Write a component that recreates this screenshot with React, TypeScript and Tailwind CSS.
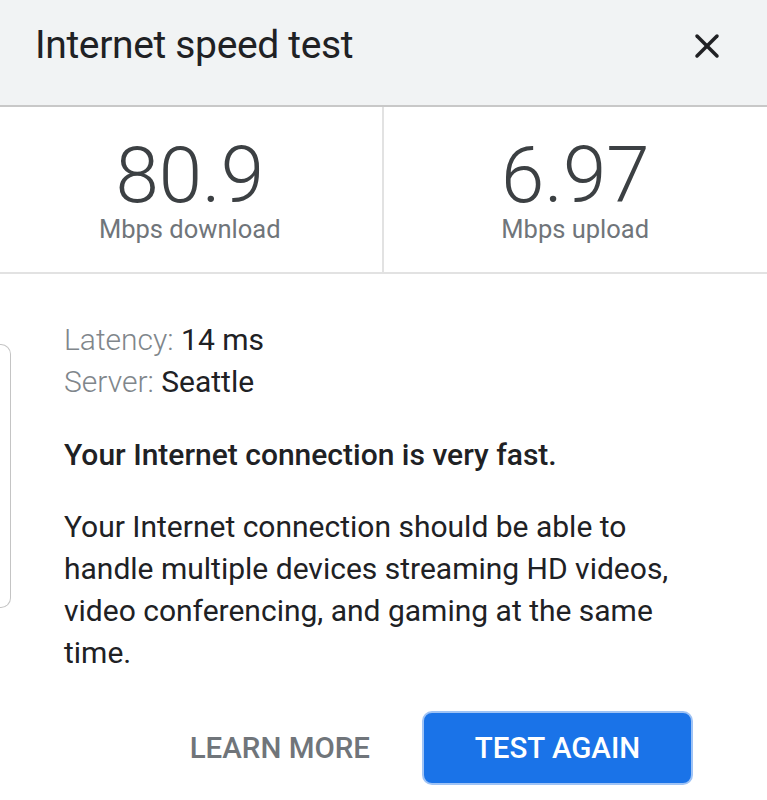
import { X } from 'lucide-react';

export default function App() {
  return (
    <div className="w-[767px] h-[800px] bg-white overflow-hidden font-['Roboto',sans-serif]">
      <div className="h-[107px] bg-[#f1f3f4] border-b-2 border-[#c8c8c8] flex items-center justify-between pl-[35px] pr-[40px]">
        <h1 className="text-[39px] text-[#202124] font-normal tracking-[-0.35px] -mt-[14px]">Internet speed test</h1>
        <button className="text-[#202124] -mt-[14px]">
          <X className="w-[40px] h-[40px]" strokeWidth={2.1} />
        </button>
      </div>

      <div className="grid grid-cols-2 h-[167px] border-b-2 border-[#e2e2e2]">
        <div className="flex flex-col items-center justify-center pt-[9px] border-r-2 border-[#e2e2e2] pr-[2px]">
          <div className="text-[78px] font-light leading-[64px] text-[#3c4043]">80.9</div>
          <div className="text-[25.5px] leading-[30px] text-[#70757a] mt-[6px]">Mbps download</div>
        </div>
        <div className="flex flex-col items-center justify-center pt-[9px]">
          <div className="text-[78px] font-light leading-[64px] text-[#3c4043]">6.97</div>
          <div className="text-[25.5px] leading-[30px] text-[#70757a] mt-[6px]">Mbps upload</div>
        </div>
      </div>

      <div className="flex items-start">
        <div className="w-[11px] h-[264px] mt-[70px] border border-l-0 border-[#c4c4c4] rounded-r-[10px] shrink-0" />
        <div className="pl-[53px] pr-[50px] pt-[45px] text-[30px] leading-[42px] text-[#202124]">
          <div>
            <span className="text-[#80868b] font-light">Latency:</span> 14 ms
          </div>
          <div>
            <span className="text-[#80868b] font-light">Server:</span> Seattle
          </div>
          <p className="font-medium mt-[31px]">Your Internet connection is very fast.</p>
          <p className="mt-[30px]">
            Your Internet connection should be able to handle multiple devices streaming HD videos, video conferencing, and gaming at the same time.
          </p>
        </div>
      </div>

      <div className="flex justify-end items-center gap-[52px] pr-[74px] mt-[37px]">
        <button className="text-[29.5px] font-medium text-[#70757a]">LEARN MORE</button>
        <button className="w-[271px] h-[74px] rounded-[10px] bg-[#1a73e8] border-2 border-[#9fc3f5] text-white text-[29.5px] font-medium">
          TEST AGAIN
        </button>
      </div>
    </div>
  );
}
